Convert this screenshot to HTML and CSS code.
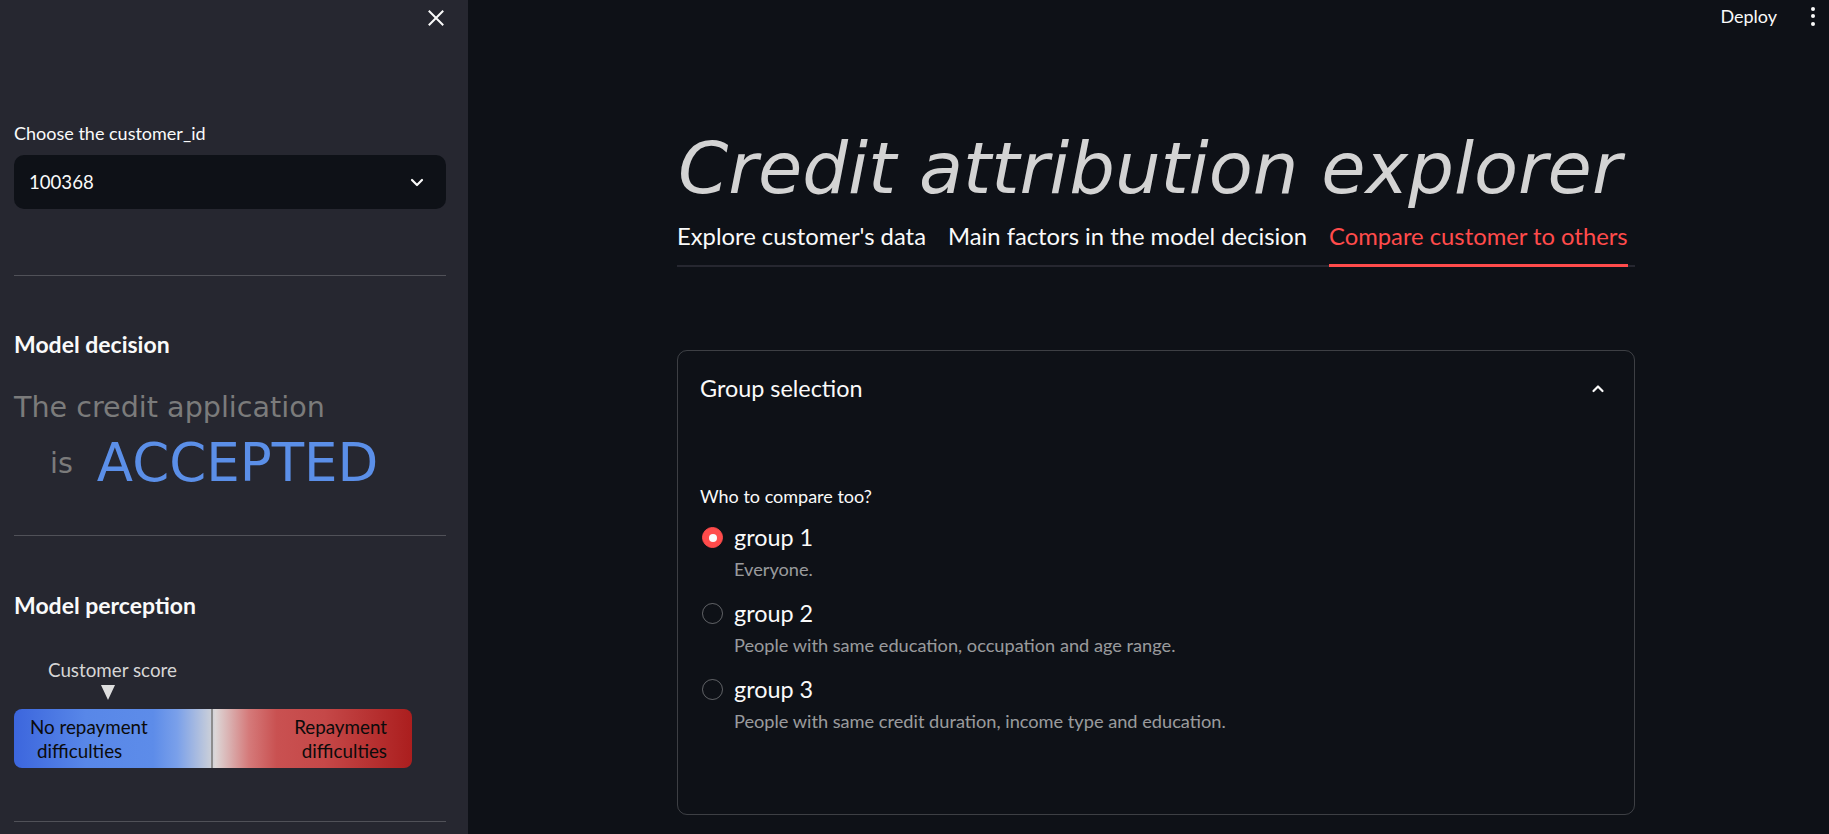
FILE: index.html
```html
<!DOCTYPE html>
<html lang="en">
<head>
<meta charset="utf-8">
<title>Credit attribution explorer</title>
<link rel="stylesheet" href="styles.css">
</head>
<body>
<aside class="sidebar">
  <div class="sb-top">
    <button class="close-btn" aria-label="Close sidebar">
      <svg width="16" height="16" viewBox="0 0 16 16"><path d="M1.5 1.5 L14.5 14.5 M14.5 1.5 L1.5 14.5" stroke="#fafafa" stroke-width="2" stroke-linecap="square" fill="none"/></svg>
    </button>
  </div>
  <div class="field">
    <div class="field-label">Choose the customer_id</div>
    <div class="select">
      <span class="select-value">100368</span>
      <svg class="select-chev" width="14" height="9" viewBox="0 0 14 9"><path d="M2 2 L7 7 L12 2" stroke="#fafafa" stroke-width="2.2" fill="none" stroke-linecap="round" stroke-linejoin="round"/></svg>
    </div>
  </div>
  <hr class="divider div-1">
  <h3 class="sb-heading head-decision">Model decision</h3>
  <div class="decision">
    <div class="decision-line">The credit application</div>
    <div class="decision-row">
      <span class="decision-is">is</span>
      <span class="decision-value">ACCEPTED</span>
    </div>
  </div>
  <hr class="divider div-2">
  <h3 class="sb-heading head-perception">Model perception</h3>
  <div class="score">
    <div class="score-marker">
      <span class="score-label">Customer score</span>
      <span class="score-arrow"></span>
    </div>
    <div class="score-bar">
      <div class="bar-left"><span>No repayment</span><span class="indent">difficulties</span></div>
      <div class="bar-mid"></div>
      <div class="bar-right"><span>Repayment</span><span>difficulties</span></div>
    </div>
  </div>
  <hr class="divider div-3">
</aside>

<main class="main">
  <header class="topbar">
    <span class="deploy">Deploy</span>
    <span class="kebab"><i></i><i></i><i></i></span>
  </header>
  <section class="content">
    <h1 class="title">Credit attribution explorer</h1>
    <nav class="tabs">
      <span class="tab">Explore customer's data</span>
      <span class="tab">Main factors in the model decision</span>
      <span class="tab active">Compare customer to others</span>
    </nav>
    <div class="expander">
      <div class="exp-head">
        <span class="exp-title">Group selection</span>
        <svg class="exp-chev" width="14" height="9" viewBox="0 0 14 9"><path d="M2.5 7 L7 2.5 L11.5 7" stroke="#fafafa" stroke-width="2.2" fill="none" stroke-linecap="round" stroke-linejoin="round"/></svg>
      </div>
      <div class="exp-body">
        <div class="radio-label">Who to compare too?</div>
        <div class="radio-list">
          <div class="radio-item">
            <span class="radio checked"></span>
            <div class="radio-text">
              <div class="radio-name">group 1</div>
              <div class="radio-caption">Everyone.</div>
            </div>
          </div>
          <div class="radio-item">
            <span class="radio"></span>
            <div class="radio-text">
              <div class="radio-name">group 2</div>
              <div class="radio-caption">People with same education, occupation and age range.</div>
            </div>
          </div>
          <div class="radio-item">
            <span class="radio"></span>
            <div class="radio-text">
              <div class="radio-name">group 3</div>
              <div class="radio-caption">People with same credit duration, income type and education.</div>
            </div>
          </div>
        </div>
      </div>
    </div>
  </section>
</main>
</body>
</html>
```

FILE: styles.css
```css
* { box-sizing: border-box; }

html, body {
  margin: 0;
  padding: 0;
  height: 834px;
  overflow: hidden;
}

body {
  display: flex;
  background: #0e1117;
  color: #fafafa;
  font-family: "Lato", "Noto Sans", sans-serif;
}

/* ---------- Sidebar ---------- */
.sidebar {
  width: 468px;
  flex-shrink: 0;
  height: 834px;
  background: #262730;
  padding: 0 22px 0 14px;
}

.sb-top {
  height: 36px;
  display: flex;
  justify-content: flex-end;
  align-items: center;
}

.close-btn {
  background: none;
  border: 0;
  padding: 0;
  margin-right: 2px;
  width: 16px;
  height: 16px;
  display: flex;
  cursor: pointer;
}

.field { margin-top: 85px; }

.field-label {
  font-size: 18px;
  line-height: 24px;
  margin-bottom: 10px;
}

.select {
  height: 54px;
  background: #0e1117;
  border-radius: 10px;
  display: flex;
  align-items: center;
  justify-content: space-between;
  padding: 0 22px 0 15px;
}

.select-value { font-size: 18.6px; }

.divider {
  border: 0;
  height: 1px;
  background: rgba(250, 250, 250, 0.2);
  margin: 0;
}

.div-1 { margin-top: 66px; }

.sb-heading {
  margin: 0;
  font-size: 23px;
  line-height: 30px;
  font-weight: 700;
}

.head-decision { margin-top: 53px; }

.decision {
  font-family: "DejaVu Sans", sans-serif;
  color: #7b7b7b;
}

.decision-line {
  font-size: 28.6px;
  line-height: 34px;
  margin-top: 31px;
}

.decision-row {
  display: flex;
  align-items: center;
  height: 64px;
  margin-top: 7px;
  padding-left: 36px;
}

.decision-is {
  font-size: 28.6px;
  line-height: 34px;
  margin-right: 24px;
}

.decision-value {
  font-size: 53px;
  line-height: 64px;
  color: #5b8fe8;
}

.div-2 { margin-top: 40px; }

.head-perception { margin-top: 54px; }

.score { margin-top: 38px; }

.score-marker {
  width: 190px;
  display: flex;
  flex-direction: column;
  align-items: flex-start;
}

.score-label {
  font-size: 18.8px;
  line-height: 24px;
  color: #d6d6d6;
  margin-left: 34px;
}

.score-arrow {
  width: 0;
  height: 0;
  border-left: 7px solid transparent;
  border-right: 7px solid transparent;
  border-top: 15px solid #dedede;
  margin-top: 3px;
  margin-left: 87px;
}

.score-bar {
  margin-top: 9px;
  width: 398px;
  height: 59px;
  border-radius: 8px;
  background: linear-gradient(to right,
    #3c66dd 0%, #5887e8 18%, #5d8ce9 35%, #7aa0ea 41%, #c9ced9 49.4%,
    #ddd7d7 50.6%, #d57a7a 59%, #c95151 66%, #c54848 78%, #ab1e1e 100%);
  display: flex;
  justify-content: space-between;
  align-items: center;
  position: relative;
  color: #0b0b0b;
  font-size: 18.8px;
  line-height: 24px;
}

.bar-left, .bar-right {
  display: flex;
  flex-direction: column;
}

.bar-left { padding-left: 16px; }
.bar-left .indent { padding-left: 7px; }

.bar-right {
  padding-right: 25px;
  align-items: flex-end;
}

.bar-mid {
  position: absolute;
  left: 197px;
  top: 0;
  width: 2px;
  height: 59px;
  background: #8d8d8d;
}

.div-3 { margin-top: 53px; }

/* ---------- Main ---------- */
.main {
  flex: 1;
  height: 834px;
  display: flex;
  flex-direction: column;
  padding-left: 209px;
}

.topbar {
  height: 32px;
  display: flex;
  justify-content: flex-end;
  align-items: center;
  gap: 34px;
  padding-right: 14px;
}

.deploy {
  font-size: 18px;
  line-height: 24px;
}

.kebab {
  display: flex;
  flex-direction: column;
  gap: 3.5px;
}

.kebab i {
  display: block;
  width: 4px;
  height: 4px;
  border-radius: 50%;
  background: #fafafa;
}

.content {
  width: 958px;
}

.title {
  margin: 92px 0 0 0;
  font-family: "DejaVu Sans", sans-serif;
  font-style: oblique;
  font-weight: 400;
  font-size: 72px;
  line-height: 88px;
  color: #d3d3d3;
  padding-left: 1px;
}

.tabs {
  margin-top: 8px;
  display: flex;
  gap: 22px;
  box-shadow: inset 0 -2px 0 #262730;
}

.tab {
  font-size: 23.8px;
  line-height: 32px;
  padding-bottom: 12px;
  border-bottom: 3px solid transparent;
  white-space: nowrap;
}

.tab.active {
  color: #ff4b4b;
  border-bottom-color: #ff4b4b;
}

.expander {
  margin-top: 83px;
  border: 1px solid rgba(250, 250, 250, 0.2);
  border-radius: 10px;
}

.exp-head {
  height: 74px;
  display: flex;
  align-items: center;
  justify-content: space-between;
  padding: 0 29px 0 22px;
}

.exp-title {
  font-size: 23.4px;
  line-height: 32px;
}

.exp-body {
  padding: 59px 22px 81px 22px;
}

.radio-label {
  font-size: 18px;
  line-height: 24px;
}

.radio-list {
  margin-top: 13px;
  display: flex;
  flex-direction: column;
  gap: 16px;
}

.radio-item {
  display: flex;
  align-items: flex-start;
}

.radio {
  width: 21px;
  height: 21px;
  border-radius: 50%;
  border: 1.5px solid rgba(250, 250, 250, 0.35);
  margin: 6px 11px 0 2px;
  flex-shrink: 0;
  display: flex;
  align-items: center;
  justify-content: center;
}

.radio.checked {
  background: #ff4b4b;
  border-color: #ff4b4b;
}

.radio.checked::after {
  content: "";
  width: 8px;
  height: 8px;
  border-radius: 50%;
  background: #fafafa;
}

.radio-name {
  font-size: 23.4px;
  line-height: 32px;
}

.radio-caption {
  margin-top: 4px;
  font-size: 18.2px;
  line-height: 24px;
  color: rgba(250, 250, 250, 0.6);
}
```
